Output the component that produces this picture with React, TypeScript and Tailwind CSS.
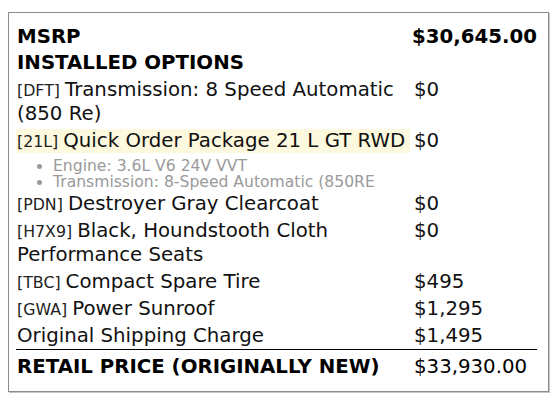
type Line = {
  code?: string;
  name: string;
  price: string;
  highlight?: boolean;
  nowrap?: boolean;
  bullets?: string[];
};

const options: Line[] = [
  { code: "DFT", name: "Transmission: 8 Speed Automatic (850 Re)", price: "$0" },
  {
    code: "21L",
    name: "Quick Order Package 21 L GT RWD",
    price: "$0",
    highlight: true,
    nowrap: true,
    bullets: ["Engine: 3.6L V6 24V VVT", "Transmission: 8-Speed Automatic (850RE"],
  },
  { code: "PDN", name: "Destroyer Gray Clearcoat", price: "$0" },
  { code: "H7X9", name: "Black, Houndstooth Cloth Performance Seats", price: "$0" },
  { code: "TBC", name: "Compact Spare Tire", price: "$495" },
  { code: "GWA", name: "Power Sunroof", price: "$1,295" },
  { name: "Original Shipping Charge", price: "$1,495" },
];

function OptionRow({ line }: { line: Line }) {
  return (
    <>
      <div className="flex py-[1.5px] leading-[24px]">
        <div
          className={`w-[394px] pl-px ${line.highlight ? "bg-[#fcf9df]" : ""} ${
            line.nowrap ? "whitespace-nowrap" : ""
          }`}
        >
          {line.code && <span className="text-[15.8px] leading-none text-[#222]">[{line.code}] </span>}
          {line.name}
        </div>
        <div className="ml-1">{line.price}</div>
      </div>
      {line.bullets && (
        <ul className="list-disc pl-[37px] pt-[4px] text-[15.6px] leading-[16px] text-[#9a9a9a]">
          {line.bullets.map((b) => (
            <li key={b} className="whitespace-nowrap">
              {b}
            </li>
          ))}
        </ul>
      )}
    </>
  );
}

export default function App() {
  return (
    <div className="w-[556px] h-[402px] bg-white pt-3 pl-2">
      {/* window sticker box */}
      <div className="w-[541px] h-[380px] border border-[#8c8c8c] shadow-[1px_1px_0_#c4c4c4] pl-[7px] pr-[11px] pt-[11px] font-['DejaVu_Sans',sans-serif] text-[19.75px] text-[#111]">
        <div className="flex leading-[26px] font-bold text-black">
          <div className="w-[394px] pl-px">MSRP</div>
          <div className="ml-1">$30,645.00</div>
        </div>
        <div className="pl-px leading-[26px] font-bold text-black">INSTALLED OPTIONS</div>

        {options.map((o) => (
          <OptionRow key={o.name} line={o} />
        ))}

        {/* total */}
        <div className="flex border-t border-black pt-[5px] leading-[24px] text-black">
          <div className="w-[394px] pl-px font-bold">RETAIL PRICE (ORIGINALLY NEW)</div>
          <div className="ml-1">$33,930.00</div>
        </div>
      </div>
    </div>
  );
}
